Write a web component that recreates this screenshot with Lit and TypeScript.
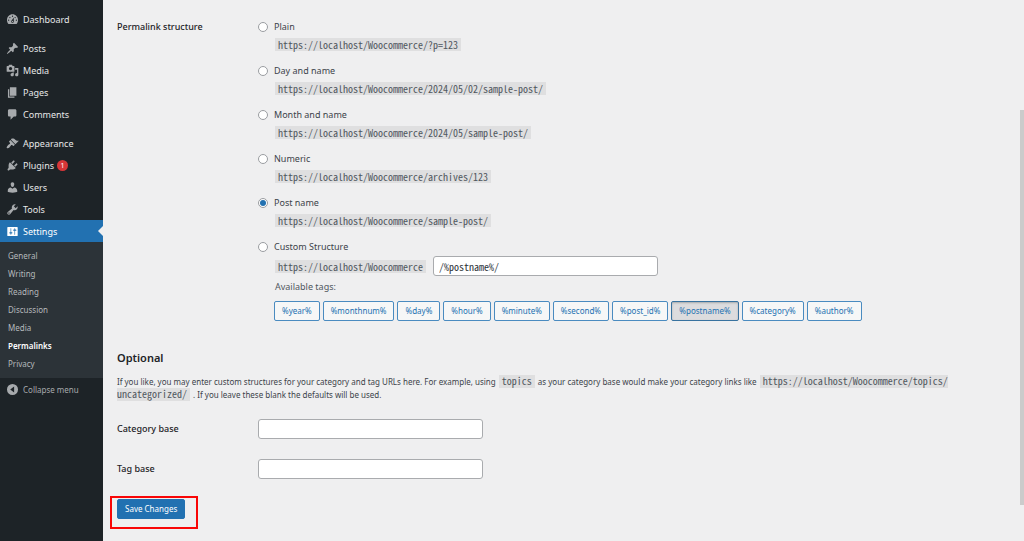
import { LitElement, html, css, svg, nothing } from "lit";
import { customElement, state } from "lit/decorators.js";
import { classMap } from "lit/directives/class-map.js";

const ICONS: Record<string, string> = {
  dashboard:
    "M3.76 17h12.48c1.35-1.66 2.26-3.77 2.26-6.03C18.5 6.03 14.69 2 10 2S1.5 6.03 1.5 10.97c0 2.26.91 4.37 2.26 6.03zM10 4c.55 0 1 .45 1 1s-.45 1-1 1-1-.45-1-1 .45-1 1-1zM6 6c.55 0 1 .45 1 1s-.45 1-1 1-1-.45-1-1 .45-1 1-1zm8 0c.55 0 1 .45 1 1s-.45 1-1 1-1-.45-1-1 .45-1 1-1zm-5.37 5.55L12 7v6c0 1.1-.9 2-2 2s-2-.9-2-2c0-.57.24-1.08.63-1.45zM4 10c.55 0 1 .45 1 1s-.45 1-1 1-1-.45-1-1 .45-1 1-1zm12 0c.55 0 1 .45 1 1s-.45 1-1 1-1-.45-1-1 .45-1 1-1zm-5 3c0-.55-.45-1-1-1s-1 .45-1 1 .45 1 1 1 1-.45 1-1z",
  posts:
    "M10.44 3.02l1.82-1.82 6.36 6.35-1.83 1.82c-1.05-.68-2.48-.57-3.41.36l-.75.75c-.92.93-1.04 2.35-.35 3.41l-1.83 1.82-2.41-2.41-2.8 2.79c-.42.42-3.38 2.71-3.8 2.29s1.86-3.39 2.28-3.81l2.79-2.79L4.1 9.36l1.83-1.82c1.05.69 2.48.57 3.4-.36l.75-.75c.93-.92 1.05-2.35.36-3.41z",
  media:
    "M13 11V4c0-.55-.45-1-1-1h-1.67L9 1H5L3.67 3H2c-.55 0-1 .45-1 1v7c0 .55.45 1 1 1h10c.55 0 1-.45 1-1zM7 4.5c1.38 0 2.5 1.12 2.5 2.5S8.38 9.5 7 9.5 4.5 8.38 4.5 7 5.62 4.5 7 4.5zM14 6h5v10.5c0 1.38-1.12 2.5-2.5 2.5S14 17.88 14 16.5s1.12-2.5 2.5-2.5c.17 0 .34.02.5.05V9h-3V6zm-4 8.05V13h2v3.5c0 1.38-1.12 2.5-2.5 2.5S7 17.88 7 16.5 8.12 14 9.5 14c.17 0 .34.02.5.05z",
  pages: "M6 15V2h10v13H6zm-1 1h8v2H3V5h2v11z",
  comments:
    "M5 2h9c1.1 0 2 .9 2 2v7c0 1.1-.9 2-2 2h-2l-5 5v-5H5c-1.1 0-2-.9-2-2V4c0-1.1.9-2 2-2z",
  appearance:
    "M14.48 11.06L7.41 3.99l1.5-1.5c.5-.56 2.3-.47 3.51.32 1.21.8 1.43 1.28 2.91 2.1 1.18.64 2.45 1.26 4.45.85zm-.71.71L6.7 4.7 4.93 6.47c-.39.39-.39 1.02 0 1.41l1.06 1.06c.39.39.39 1.03 0 1.42-.6.6-1.43 1.11-2.21 1.69-.35.26-.7.53-1.01.84C1.43 14.23.4 16.08 1.4 17.07c.99 1 2.84-.03 4.18-1.36.31-.31.58-.66.85-1.02.57-.78 1.08-1.61 1.69-2.21.39-.39 1.02-.39 1.41 0l1.06 1.06c.39.39 1.02.39 1.41 0z",
  plugins:
    "M13.11 4.36L9.87 7.6 8 5.73l3.24-3.24c.35-.34 1.05-.2 1.56.32.52.51.66 1.21.31 1.55zm-8 1.77l.91-1.12 9.01 9.01-1.19.84c-.71.71-2.63 1.16-3.82 1.16H6.14L4.9 17.26c-.59.59-1.54.59-2.12 0-.59-.58-.59-1.53 0-2.12l1.24-1.24v-3.88c0-1.13.4-3.19 1.09-3.89zm7.26 3.97l3.24-3.24c.34-.35 1.04-.21 1.55.31.52.51.66 1.21.31 1.55l-3.24 3.25z",
  users:
    "M10 9.25c-2.27 0-2.73-3.44-2.73-3.44C7 4.02 7.82 2 9.97 2c2.16 0 2.98 2.02 2.71 3.81 0 0-.41 3.44-2.68 3.44zm0 2.57L12.72 10c2.39 0 4.52 2.33 4.52 4.53v2.49s-3.65 1.13-7.24 1.13c-3.65 0-7.24-1.13-7.24-1.13v-2.49c0-2.25 1.94-4.48 4.47-4.48z",
  tools:
    "M16.68 9.77c-1.34 1.34-3.3 1.67-4.95.99l-5.41 6.52c-.99.99-2.59.99-3.58 0s-.99-2.59 0-3.57l6.52-5.42c-.68-1.65-.35-3.61.99-4.95 1.28-1.28 3.12-1.62 4.72-1.06l-2.89 2.89 2.82 2.82 2.86-2.87c.53 1.58.18 3.39-1.08 4.65zM3.81 16.21c.4.39 1.04.39 1.43 0 .4-.4.4-1.04 0-1.43-.39-.4-1.03-.4-1.43 0-.39.39-.39 1.03 0 1.43z",
  settings:
    "M18 16V4c0-.55-.45-1-1-1H3c-.55 0-1 .45-1 1v12c0 .55.45 1 1 1h14c.55 0 1-.45 1-1zM8 11h1c.55 0 1 .45 1 1s-.45 1-1 1H8v1.5c0 .28-.22.5-.5.5s-.5-.22-.5-.5V13H6c-.55 0-1-.45-1-1s.45-1 1-1h1V5.5c0-.28.22-.5.5-.5s.5.22.5.5V11zm5-2h-1c-.55 0-1-.45-1-1s.45-1 1-1h1V5.5c0-.28.22-.5.5-.5s.5.22.5.5V7h1c.55 0 1 .45 1 1s-.45 1-1 1h-1v5.5c0 .28-.22.5-.5.5s-.5-.22-.5-.5V9z",
  collapse:
    "M10 1.5a8.5 8.5 0 1 0 0 17a8.5 8.5 0 1 0 0-17zM12.5 5.5v9L6.5 10z",
};

const icon = (name: string) => html`
  <svg class="icon" viewBox="0 0 20 20" aria-hidden="true">
    ${svg`<path fill-rule="evenodd" d=${ICONS[name]}></path>`}
  </svg>
`;

interface MenuEntry {
  icon: string;
  label: string;
  badge?: number;
  current?: boolean;
}

const MENU: MenuEntry[][] = [
  [{ icon: "dashboard", label: "Dashboard" }],
  [
    { icon: "posts", label: "Posts" },
    { icon: "media", label: "Media" },
    { icon: "pages", label: "Pages" },
    { icon: "comments", label: "Comments" },
  ],
  [
    { icon: "appearance", label: "Appearance" },
    { icon: "plugins", label: "Plugins", badge: 1 },
    { icon: "users", label: "Users" },
    { icon: "tools", label: "Tools" },
    { icon: "settings", label: "Settings", current: true },
  ],
];

const SUBMENU = ["General", "Writing", "Reading", "Discussion", "Media", "Permalinks", "Privacy"];

@customElement("admin-menu")
export class AdminMenu extends LitElement {
  static styles = css`
    :host {
      display: block;
      box-sizing: border-box;
      padding-top: 8px;
      background: #1d2327;
      font-size: 9px;
    }
    .group {
      margin: 0 0 7px;
      padding: 0;
      list-style: none;
    }
    .group:last-of-type {
      margin-bottom: 0;
    }
    .item {
      position: relative;
      display: flex;
      align-items: center;
      box-sizing: border-box;
      width: 100%;
      height: 22px;
      padding: 0 6px;
      border: 0;
      background: none;
      color: #e6e7e8;
      font: inherit;
      text-decoration: none;
    }
    .icon {
      flex: none;
      width: 13px;
      height: 13px;
      margin-right: 4px;
      fill: #a7aaad;
    }
    .current {
      background: #2271b1;
      color: #fff;
    }
    .current .icon {
      fill: #fff;
    }
    .current::after {
      content: "";
      position: absolute;
      right: 0;
      top: 6px;
      border: 5px solid transparent;
      border-left-width: 0;
      border-right-color: #efeff0;
    }
    .badge {
      width: 11px;
      margin-left: 3px;
      border-radius: 6px;
      background: #d63638;
      color: #fff;
      font-size: 7px;
      line-height: 11px;
      text-align: center;
    }
    .submenu {
      margin: 0;
      padding: 5px 0;
      list-style: none;
      background: #2c3338;
    }
    .sub {
      display: block;
      padding: 0 8px;
      color: #b5b9bc;
      font-size: 8px;
      line-height: 18px;
      text-decoration: none;
    }
    .active {
      color: #fff;
      font-weight: 600;
    }
    .collapse {
      color: #a7aaad;
      font-size: 8px;
    }
  `;

  render() {
    return html`
      <nav aria-label="Main menu">
        ${MENU.map(
          (group) => html`
            <ul class="group">
              ${group.map(
                (m) => html`
                  <li>
                    <a class=${classMap({ item: true, current: !!m.current })} href="#">
                      ${icon(m.icon)}<span>${m.label}</span>
                      ${m.badge ? html`<span class="badge">${m.badge}</span>` : nothing}
                    </a>
                    ${m.current
                      ? html`<ul class="submenu">
                          ${SUBMENU.map(
                            (s) => html`<li>
                              <a class=${classMap({ sub: true, active: s === "Permalinks" })} href="#">${s}</a>
                            </li>`
                          )}
                        </ul>`
                      : nothing}
                  </li>
                `
              )}
            </ul>
          `
        )}
        <button class="item collapse" type="button">${icon("collapse")}<span>Collapse menu</span></button>
      </nav>
    `;
  }
}

const BASE = "https://localhost/Woocommerce";

const STRUCTURES = [
  { id: "plain", label: "Plain", sample: "/?p=123" },
  { id: "day", label: "Day and name", sample: "/2024/05/02/sample-post/" },
  { id: "month", label: "Month and name", sample: "/2024/05/sample-post/" },
  { id: "numeric", label: "Numeric", sample: "/archives/123" },
  { id: "post", label: "Post name", sample: "/sample-post/" },
];

const TAGS = ["year", "monthnum", "day", "hour", "minute", "second", "post_id", "postname", "category", "author"];

@customElement("permalink-form")
export class PermalinkForm extends LitElement {
  @state() private selected = "post";

  static styles = css`
    :host {
      display: block;
      box-sizing: border-box;
      padding: 18px 68px 12px 14px;
      color: #3c434a;
      font-size: 9px;
    }
    .row {
      display: grid;
      grid-template-columns: 141px 1fr;
      margin: 0;
      padding: 0;
      border: 0;
    }
    .heading {
      color: #1d2327;
      font-weight: 500;
      line-height: 18px;
    }
    .choice {
      display: flex;
      align-items: center;
      gap: 6px;
      line-height: 18px;
    }
    .radio {
      appearance: none;
      display: grid;
      place-items: center;
      flex: none;
      box-sizing: border-box;
      width: 10px;
      height: 10px;
      margin: 0;
      border: 1px solid #9a9da1;
      border-radius: 50%;
      background: #fff;
    }
    .radio:checked::before {
      content: "";
      width: 6px;
      height: 6px;
      border-radius: 50%;
      background: #2271b1;
    }
    .sample {
      display: flex;
      align-items: center;
      height: 16px;
      margin: 0 0 10px 17px;
    }
    .code {
      padding: 1px 3px;
      background: #dfdfe0;
      color: #50575e;
      font-family: "Noto Sans Mono CJK SC", "DejaVu Sans Mono", monospace;
      font-size: 10px;
      line-height: 11px;
    }
    .text {
      box-sizing: border-box;
      width: 225px;
      height: 20px;
      padding: 0 5px;
      border: 1px solid #a9abae;
      border-radius: 3px;
      background: #fff;
      color: #2c3338;
      font: inherit;
    }
    .mono {
      font-family: "Noto Sans Mono CJK SC", "DejaVu Sans Mono", monospace;
      font-size: 10px;
    }
    .custom {
      display: flex;
      align-items: center;
      gap: 7px;
      padding-left: 17px;
    }
    .hint {
      margin: 4px 0 7px 17px;
      line-height: 14px;
      color: #50575e;
    }
    .tags {
      display: flex;
      flex-wrap: wrap;
      gap: 3px;
      margin: 0;
      padding: 0 0 0 16px;
      list-style: none;
    }
    .tag,
    .save {
      display: block;
      box-sizing: border-box;
      height: 20px;
      padding: 0 7px;
      border: 1px solid #4a8bc0;
      border-radius: 2px;
      background: #f6f7f7;
      color: #2271b1;
      font: inherit;
      font-size: 8px;
      line-height: 18px;
    }
    .pressed {
      border-color: #38729f;
      background: #dcdcde;
      box-shadow: inset 0 1px 2px #a7aaad;
    }
    .title {
      margin: 28px 0 8px;
      color: #1d2327;
      font-size: 11px;
      font-weight: 600;
      line-height: 18px;
    }
    .note {
      margin: 0 0 18px;
      font-size: 8px;
      line-height: 13px;
    }
    /* The face's tall line box would cover descenders of the line above. */
    .note .code {
      margin: 0 1px;
      padding: 0 3px;
      background: linear-gradient(transparent 2px, #dfdfe0 2px);
    }
    .field {
      align-items: center;
      margin-bottom: 20px;
    }
    .submit {
      position: relative;
      width: max-content;
      margin: 0;
    }
    .save {
      border-color: #2271b1;
      background: #2271b1;
      color: #fff;
    }
    .marker {
      position: absolute;
      inset: -3px -13px -10px -7px;
      border: 2px solid #f90606;
      pointer-events: none;
    }
  `;

  private option(id: string, label: string) {
    return html`<label class="choice">
      <input
        class="radio"
        type="radio"
        name="structure"
        .checked=${this.selected === id}
        @change=${() => (this.selected = id)}
      />${label}
    </label>`;
  }

  render() {
    return html`
      <form @submit=${(e: Event) => e.preventDefault()}>
        <div class="row" role="radiogroup" aria-labelledby="structure">
          <div class="heading" id="structure">Permalink structure</div>
          <div>
            ${STRUCTURES.map(
              (s) => html`${this.option(s.id, s.label)}
                <div class="sample"><code class="code">${BASE}${s.sample}</code></div>`
            )}
            ${this.option("custom", "Custom Structure")}
            <div class="custom">
              <code class="code">${BASE}</code>
              <input class="text mono" type="text" aria-label="Custom structure" value="/%postname%/" />
            </div>
            <p class="hint">Available tags:</p>
            <ul class="tags">
              ${TAGS.map(
                (t) => html`<li>
                  <button type="button" class=${classMap({ tag: true, pressed: t === "postname" })}>%${t}%</button>
                </li>`
              )}
            </ul>
          </div>
        </div>
        <h2 class="title">Optional</h2>
        <p class="note">
          If you like, you may enter custom structures for your category and tag URLs here. For example, using
          <code class="code">topics</code> as your category base would make your category links like
          <code class="code">${BASE}/topics/<wbr />uncategorized/</code> . If you leave these blank the defaults will be
          used.
        </p>
        <div class="row field">
          <label class="heading" for="category">Category base</label>
          <div><input class="text" id="category" type="text" /></div>
        </div>
        <div class="row field">
          <label class="heading" for="tag">Tag base</label>
          <div><input class="text" id="tag" type="text" /></div>
        </div>
        <div class="submit">
          <button class="save" type="submit">Save Changes</button>
          <span class="marker"></span>
        </div>
      </form>
    `;
  }
}

@customElement("app-root")
export class AppRoot extends LitElement {
  static styles = css`
    :host {
      position: relative;
      display: grid;
      grid-template-columns: 103px 1fr;
      min-height: 100vh;
      background: #efeff0;
      font-family: "Noto Sans", sans-serif;
    }
    .thumb {
      position: absolute;
      right: 0;
      top: 110px;
      bottom: 36px;
      width: 4px;
      background: #cbcbcb;
    }
  `;

  render() {
    return html`
      <admin-menu></admin-menu>
      <permalink-form></permalink-form>
      <div class="thumb"></div>
    `;
  }
}
